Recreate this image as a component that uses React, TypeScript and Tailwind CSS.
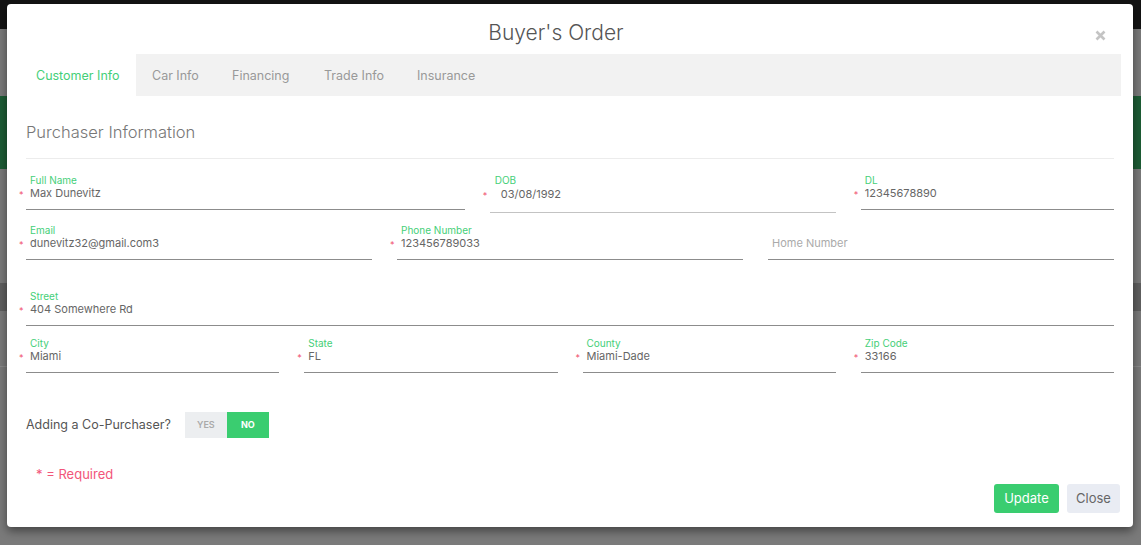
const font = { fontFamily: "Inter, 'Open Sans', sans-serif" };

type FieldProps = {
  label?: string;
  value?: string;
  placeholder?: string;
  required?: boolean;
  span: string;
  date?: boolean;
};

function Field({ label, value, placeholder, required, span, date }: FieldProps) {
  return (
    <div className={`${span} relative ${date ? "mb-[-3px]" : ""}`}>
      {required && (
        <span className={`absolute left-[-7px] text-[9px] text-[#f0506e] ${date ? "top-[15px]" : "top-[14px]"}`}>
          *
        </span>
      )}
      <div className={`h-[13px] text-[10px] leading-[13px] text-[#45cf78] ${date ? "pl-[5px]" : "pl-[4px]"}`}>
        {label}
      </div>
      <div
        className={`border-b ${
          date
            ? "h-[26px] pl-[11px] pt-[1px] border-[#c3c3c3]"
            : "h-[23px] pl-[4px] border-[#8c8c8c]"
        } text-[11px] leading-[13px] ${placeholder ? "text-[#aaa]" : "text-[#666]"}`}
      >
        {value ?? placeholder}
      </div>
    </div>
  );
}

const tabs = [
  { name: "Customer Info", w: "w-[116px]", active: true },
  { name: "Car Info", w: "w-[80px]" },
  { name: "Financing", w: "w-[92px]" },
  { name: "Trade Info", w: "w-[93px]" },
  { name: "Insurance", w: "w-[100px]" },
];

export default function App() {
  return (
    <div className="relative h-[545px] w-full overflow-hidden bg-[#7a7a7a]" style={font}>
      {/* page behind the overlay */}
      <div className="h-[29px] bg-[#131313]" />
      <div className="mt-[67px] h-[73px] bg-[#1d5c35]" />
      <div className="mt-[114px] h-[28px] bg-[#5f5f5f]" />
      <div className="mt-[55px] h-px bg-[#8a8a8a]" />

      {/* modal */}
      <div className="absolute left-[7px] top-[4px] flex h-[523px] w-[1126px] flex-col rounded-[4px] bg-white pl-[13px] pr-[12px] shadow-[0_4px_10px_rgba(0,0,0,0.45)]">
        <div className="flex h-[50px] items-start pt-[16px]">
          <h2 className="flex-1 text-center text-[21px] font-light leading-[26px] text-[#555]">
            Buyer's Order
          </h2>
          <button className="w-[29px] pl-[3px] pt-[10px]">
            <svg width="11" height="11" viewBox="0 0 11 11">
              <path d="M1.5 1.5 L9.5 9.5 M9.5 1.5 L1.5 9.5" stroke="#c4c4c4" strokeWidth="2.6" />
            </svg>
          </button>
        </div>

        <div className="flex h-[42px] bg-[#f2f2f2]">
          {tabs.map((t) => (
            <div
              key={t.name}
              className={`${t.w} flex items-center pl-4 pt-[2px] text-[12.5px] ${
                t.active ? "bg-white text-[#45cf78]" : "text-[#999]"
              }`}
            >
              {t.name}
            </div>
          ))}
        </div>

        <div className="pl-[6px] pr-[7px]">
          <h3 className="mt-[26px] text-[16.5px] font-light leading-[20px] text-[#777]">
            Purchaser Information
          </h3>
          <hr className="mt-[16px] border-[#ececec]" />

          <div className="mt-[15px] grid grid-cols-12 gap-x-[25px]">
            <Field span="col-span-5" label="Full Name" value="Max Dunevitz" required />
            <Field span="col-span-4" label="DOB" value="03/08/1992" required date />
            <Field span="col-span-3" label="DL" value="12345678890" required />
          </div>

          <div className="mt-[14px] grid grid-cols-12 gap-x-[25px]">
            <Field span="col-span-4" label="Email" value="dunevitz32@gmail.com3" required />
            <Field span="col-span-4" label="Phone Number" value="123456789033" required />
            <Field span="col-span-4" placeholder="Home Number" />
          </div>

          <div className="mt-[30px] grid grid-cols-12 gap-x-[25px]">
            <Field span="col-span-12" label="Street" value="404 Somewhere Rd" required />
          </div>

          <div className="mt-[11px] grid grid-cols-12 gap-x-[25px]">
            <Field span="col-span-3" label="City" value="Miami" required />
            <Field span="col-span-3" label="State" value="FL" required />
            <Field span="col-span-3" label="County" value="Miami-Dade" required />
            <Field span="col-span-3" label="Zip Code" value="33166" required />
          </div>

          <div className="mt-[39px] flex items-center">
            <span className="text-[12.5px] text-[#555]">Adding a Co-Purchaser?</span>
            <div className="ml-[14px] flex h-[26px]">
              <button className="w-[42px] bg-[#eceef0] text-[9px] font-semibold text-[#aaa]">YES</button>
              <button className="w-[42px] bg-[#3acd70] text-[9px] font-bold text-white">NO</button>
            </div>
          </div>

          <p className="mt-[26px] pl-[10px] text-[13px] leading-[20px] text-[#f2557a]">* = Required</p>
        </div>

        <div className="flex justify-end gap-[8px] pr-px">
          <button className="h-[29px] w-[65px] rounded-[3px] bg-[#3acd70] text-[13px] text-white">Update</button>
          <button className="h-[29px] w-[53px] rounded-[3px] bg-[#e9ecf3] text-[13px] text-[#666]">Close</button>
        </div>
      </div>
    </div>
  );
}
